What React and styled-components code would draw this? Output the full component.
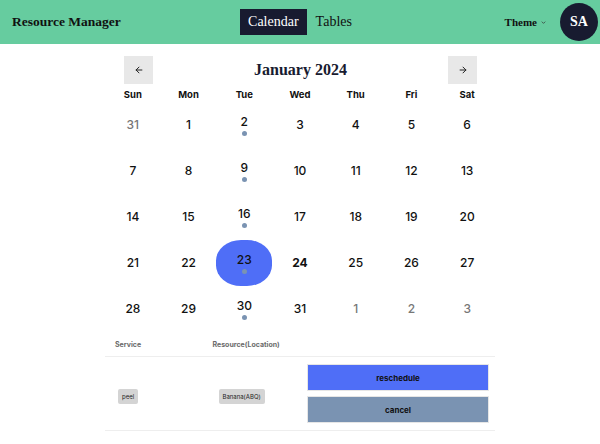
import styled, { createGlobalStyle } from "styled-components";

const GlobalStyle = createGlobalStyle`
  html, body {
    margin: 0;
    padding: 0;
    background: #ffffff;
    font-family: Inter, "Noto Sans", sans-serif;
    color: #111;
  }
`;

const days = ["Sun", "Mon", "Tue", "Wed", "Thu", "Fri", "Sat"];

// build the january grid: last day of dec, all of jan, first days of feb
const buildCells = () => {
  const cells = [{ n: 31, other: true }];
  for (let i = 1; i <= 31; i++) {
    cells.push({
      n: i,
      event: [2, 9, 16, 23, 30].includes(i),
      selected: i === 23,
      today: i === 24,
    });
  }
  [1, 2, 3].forEach((n) => cells.push({ n, other: true }));
  return cells;
};

const App = () => {
  const cells = buildCells();

  return (
    <>
      <GlobalStyle />
      <Header>
        <Brand>Resource Manager</Brand>
        <Nav>
          <NavItem active>Calendar</NavItem>
          <NavItem>Tables</NavItem>
        </Nav>
        <RightSide>
          <ThemeToggle>
            Theme
            <svg width="7" height="7" viewBox="0 0 24 24" fill="none" stroke="#333" strokeWidth="2.5">
              <path d="M6 9l6 6 6-6" />
            </svg>
          </ThemeToggle>
          <Avatar>SA</Avatar>
        </RightSide>
      </Header>

      <Main>
        <MonthBar>
          <ArrowButton>
            <svg width="10" height="10" viewBox="0 0 24 24" fill="none" stroke="#222" strokeWidth="2.4" strokeLinecap="round" strokeLinejoin="round">
              <path d="M19 12H5M12 19l-7-7 7-7" />
            </svg>
          </ArrowButton>
          <MonthTitle>January 2024</MonthTitle>
          <ArrowButton>
            <svg width="10" height="10" viewBox="0 0 24 24" fill="none" stroke="#222" strokeWidth="2.4" strokeLinecap="round" strokeLinejoin="round">
              <path d="M5 12h14M12 5l7 7-7 7" />
            </svg>
          </ArrowButton>
        </MonthBar>

        <WeekRow>
          {days.map((d) => (
            <WeekDay key={d}>{d}</WeekDay>
          ))}
        </WeekRow>

        <DayGrid>
          {cells.map((c, i) => (
            <DayCell key={i} selected={c.selected}>
              <DayNum other={c.other} today={c.today}>
                {c.n}
              </DayNum>
              {c.event && <Dot />}
            </DayCell>
          ))}
        </DayGrid>

        <Table>
          <thead>
            <tr>
              <Th w="25%">Service</Th>
              <Th w="25%">Resource(Location)</Th>
              <Th w="50%" />
            </tr>
          </thead>
          <tbody>
            <tr>
              <Td pad="13px">
                <Chip>peel</Chip>
              </Td>
              <Td pad="16px">
                <Chip>Banana(ABQ)</Chip>
              </Td>
              <Td pad="7px">
                <Actions>
                  <ActionButton variant="primary">reschedule</ActionButton>
                  <ActionButton variant="muted">cancel</ActionButton>
                </Actions>
              </Td>
            </tr>
          </tbody>
        </Table>
      </Main>
    </>
  );
};

export default App;

const Header = styled.header`
  height: 44px;
  background: #66cc9f;
  display: grid;
  grid-template-columns: 1fr auto 1fr;
  align-items: center;
  padding: 0 2px 0 12px;
`;

const Brand = styled.div`
  font-family: "Liberation Serif", "DejaVu Serif", serif;
  font-weight: 700;
  font-size: 13.5px;
  color: #111;
`;

const Nav = styled.nav`
  display: flex;
  align-items: center;
  gap: 1px;
  margin-right: 10px;
`;

const NavItem = styled.div`
  font-family: "Liberation Serif", "DejaVu Serif", serif;
  font-size: 14px;
  height: 26px;
  display: flex;
  align-items: center;
  padding: 0 8px;
  color: ${(p) => (p.active ? "#fff" : "#111")};
  background: ${(p) => (p.active ? "#181b30" : "transparent")};
`;

const RightSide = styled.div`
  display: flex;
  justify-content: flex-end;
  align-items: center;
  gap: 13px;
`;

const ThemeToggle = styled.div`
  font-family: "Liberation Serif", "DejaVu Serif", serif;
  font-weight: 700;
  font-size: 11px;
  display: flex;
  align-items: center;
  gap: 3px;
`;

const Avatar = styled.div`
  width: 38px;
  height: 38px;
  border-radius: 50%;
  background: #181b30;
  color: #fff;
  display: flex;
  align-items: center;
  justify-content: center;
  font-family: "Liberation Serif", "DejaVu Serif", serif;
  font-weight: 700;
  font-size: 14px;
`;

const Main = styled.main`
  width: 390px;
  margin: 0 auto;
  padding-top: 12px;
`;

const MonthBar = styled.div`
  display: flex;
  justify-content: space-between;
  align-items: center;
  padding: 0 18px 0 19px;
`;

const ArrowButton = styled.button`
  width: 29px;
  height: 28px;
  border: none;
  background: #e8e8e8;
  display: flex;
  align-items: center;
  justify-content: center;
  padding: 0;
`;

const MonthTitle = styled.h2`
  margin: 0;
  font-family: "Liberation Serif", "DejaVu Serif", serif;
  font-weight: 700;
  font-size: 16px;
  color: #181b30;
`;

const WeekRow = styled.div`
  display: grid;
  grid-template-columns: repeat(7, 1fr);
  height: 16px;
  align-items: center;
  margin-top: 2px;
`;

const WeekDay = styled.div`
  text-align: center;
  font-size: 9.5px;
  font-weight: 700;
  color: #111;
`;

const DayGrid = styled.div`
  display: grid;
  grid-template-columns: repeat(7, 1fr);
  grid-auto-rows: 46px;
`;

const DayCell = styled.div`
  display: flex;
  flex-direction: column;
  align-items: center;
  justify-content: center;
  gap: 2px;
  background: ${(p) => (p.selected ? "#4f6ef7" : "transparent")};
  border-radius: ${(p) => (p.selected ? "45%" : "0")};
`;

const DayNum = styled.span`
  font-size: 12px;
  font-weight: ${(p) => (p.today ? 700 : 500)};
  color: ${(p) => (p.other ? "#777" : "#111")};
  line-height: 14px;
`;

const Dot = styled.span`
  width: 5px;
  height: 5px;
  border-radius: 50%;
  background: #7a93b2;
`;

const Table = styled.table`
  width: 100%;
  border-collapse: collapse;
  table-layout: fixed;
  margin-top: 3px;
`;

const Th = styled.th`
  box-sizing: border-box;
  width: ${(p) => p.w};
  text-align: left;
  font-size: 7px;
  font-weight: 700;
  color: #6b6b6b;
  padding: 5px 10px 7px;
  border-bottom: 1px solid #eee;
`;

const Td = styled.td`
  padding: 7px 6px 7px ${(p) => p.pad};
  border-bottom: 1px solid #eee;
  vertical-align: middle;
`;

const Actions = styled.div`
  display: flex;
  flex-direction: column;
  gap: 5px;
`;

const Chip = styled.span`
  display: inline-block;
  background: #d4d4d4;
  font-size: 6px;
  color: #222;
  padding: 4px 4px;
  border-radius: 2px;
`;

const ActionButton = styled.button`
  height: 27px;
  border: 1px solid #e6e6e6;
  font-family: Inter, "Noto Sans", sans-serif;
  font-weight: 700;
  font-size: 8px;
  color: #111;
  background: ${(p) => (p.variant === "primary" ? "#4f6ef7" : "#7a93b2")};
`;
